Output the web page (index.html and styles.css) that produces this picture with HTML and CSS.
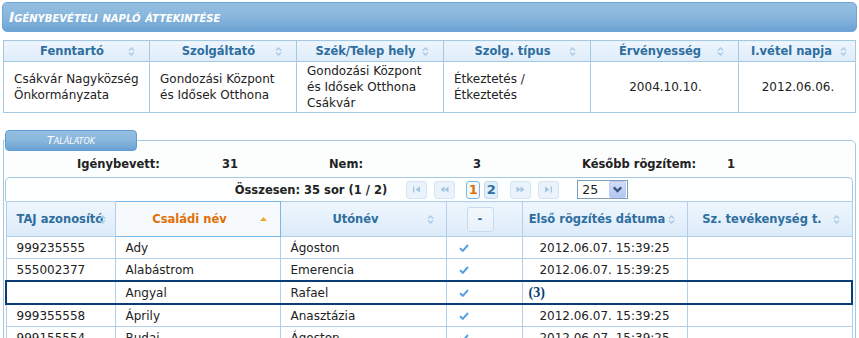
FILE: index.html
```html
<!doctype html>
<html lang="hu">
  <head>
    <meta charset="UTF-8" />
    <meta name="viewport" content="width=device-width, initial-scale=1.0" />
    <title>Igénybevételi napló áttekintése</title>
    <link rel="stylesheet" href="styles.css">
  </head>
  <body>
    <svg class="defs" width="0" height="0">
      <symbol id="i-sort" viewBox="0 0 7 9">
        <path d="M1 3.5 L3.5 1 L6 3.5 M1 5.5 L3.5 8 L6 5.5" fill="none" stroke="currentColor" stroke-width="1.4" />
      </symbol>
      <symbol id="i-check" viewBox="0 0 10 8">
        <path d="M1 4.2 L3.8 6.8 L9 1" fill="none" stroke="currentColor" stroke-width="2" />
      </symbol>
      <symbol id="i-first" viewBox="0 0 9 7">
        <path d="M1 0.5 h1.3 v6 h-1.3 z M8 0.5 L3.5 3.5 L8 6.5 z" fill="currentColor" />
      </symbol>
      <symbol id="i-prev" viewBox="0 0 9 7">
        <path d="M4.5 0.5 L0.5 3.5 L4.5 6.5 z M8.5 0.5 L4.5 3.5 L8.5 6.5 z" fill="currentColor" />
      </symbol>
      <symbol id="i-next" viewBox="0 0 9 7">
        <path d="M0.5 0.5 L4.5 3.5 L0.5 6.5 z M4.5 0.5 L8.5 3.5 L4.5 6.5 z" fill="currentColor" />
      </symbol>
      <symbol id="i-last" viewBox="0 0 9 7">
        <path d="M1 0.5 L5.5 3.5 L1 6.5 z M6.7 0.5 h1.3 v6 h-1.3 z" fill="currentColor" />
      </symbol>
    </svg>

    <div class="page-title">Igénybevételi napló áttekintése</div>

    <table class="summary">
      <colgroup>
        <col style="width: 146px" />
        <col style="width: 147px" />
        <col style="width: 147px" />
        <col style="width: 147px" />
        <col style="width: 148px" />
        <col />
      </colgroup>
      <thead>
        <tr>
          <th><div class="th-in"><span class="th-label">Fenntartó</span><svg class="sort"><use href="#i-sort" /></svg></div></th>
          <th><div class="th-in"><span class="th-label">Szolgáltató</span><svg class="sort"><use href="#i-sort" /></svg></div></th>
          <th><div class="th-in"><span class="th-label">Szék/Telep hely</span><svg class="sort"><use href="#i-sort" /></svg></div></th>
          <th><div class="th-in"><span class="th-label">Szolg. típus</span><svg class="sort"><use href="#i-sort" /></svg></div></th>
          <th><div class="th-in"><span class="th-label">Érvényesség</span><svg class="sort"><use href="#i-sort" /></svg></div></th>
          <th class="narrow"><div class="th-in"><span class="th-label">I.vétel napja</span><svg class="sort"><use href="#i-sort" /></svg></div></th>
        </tr>
      </thead>
      <tbody>
        <tr>
          <td>Csákvár Nagyközség Önkormányzata</td>
          <td>Gondozási Központ és Idősek Otthona</td>
          <td>Gondozási Központ és Idősek Otthona Csákvár</td>
          <td>Étkeztetés / Étkeztetés</td>
          <td class="center">2004.10.10.</td>
          <td class="center">2012.06.06.</td>
        </tr>
      </tbody>
    </table>

    <fieldset class="results">
      <legend><span class="legend-text">Találatok</span></legend>

      <div class="stats">
        <span>Igénybevett:</span><span>31</span>
        <span>Nem:</span><span>3</span>
        <span>Később rögzítem:</span><span>1</span>
      </div>

      <div class="pager">
        <span class="pager-total">Összesen: 35 sor (1 / 2)</span>
        <span class="pager-btns">
          <span class="pg-btn"><svg><use href="#i-first" /></svg></span>
          <span class="pg-btn"><svg><use href="#i-prev" /></svg></span>
        </span>
        <span class="pager-pages">
          <span class="pg-num active">1</span>
          <span class="pg-num">2</span>
        </span>
        <span class="pager-btns">
          <span class="pg-btn"><svg><use href="#i-next" /></svg></span>
          <span class="pg-btn"><svg><use href="#i-last" /></svg></span>
        </span>
        <span class="page-size">
          <span class="page-size-val">25</span>
          <span class="page-size-btn"><svg viewBox="0 0 14 14"><path d="M3.5 5 L7 8.5 L10.5 5" fill="none" stroke="#3d5582" stroke-width="2.2" /></svg></span>
        </span>
      </div>

      <table class="grid">
        <colgroup>
          <col style="width: 109px" />
          <col style="width: 165px" />
          <col style="width: 166px" />
          <col style="width: 76px" />
          <col style="width: 165px" />
          <col />
        </colgroup>
        <thead>
          <tr>
            <th class="taj"><div class="th-in"><span class="th-label">TAJ azonosító</span><svg class="sort"><use href="#i-sort" /></svg></div></th>
            <th class="active"><div class="th-in"><span class="th-label">Családi név</span><svg class="sort-up" viewBox="0 0 7 4"><path d="M0 4 L3.5 0 L7 4 z" fill="#f0a72a" /></svg></div></th>
            <th><div class="th-in"><span class="th-label">Utónév</span><svg class="sort"><use href="#i-sort" /></svg></div></th>
            <th><div class="th-in center"><span class="mini-btn">-</span></div></th>
            <th><div class="th-in"><span class="th-label">Első rögzítés dátuma</span><svg class="sort"><use href="#i-sort" /></svg></div></th>
            <th><div class="th-in"><span class="th-label">Sz. tevékenység t.</span><svg class="sort"><use href="#i-sort" /></svg></div></th>
          </tr>
        </thead>
        <tbody>
          <tr>
            <td>999235555</td><td>Ady</td><td>Ágoston</td>
            <td><svg class="check"><use href="#i-check" /></svg></td>
            <td class="center">2012.06.07. 15:39:25</td><td></td>
          </tr>
          <tr>
            <td>555002377</td><td>Alabástrom</td><td>Emerencia</td>
            <td><svg class="check"><use href="#i-check" /></svg></td>
            <td class="center">2012.06.07. 15:39:25</td><td></td>
          </tr>
          <tr class="selected">
            <td></td><td>Angyal</td><td>Rafael</td>
            <td><svg class="check"><use href="#i-check" /></svg></td>
            <td class="later">(3)</td><td></td>
          </tr>
          <tr>
            <td>999355558</td><td>Áprily</td><td>Anasztázia</td>
            <td><svg class="check"><use href="#i-check" /></svg></td>
            <td class="center">2012.06.07. 15:39:25</td><td></td>
          </tr>
          <tr>
            <td>999155554</td><td>Budai</td><td>Ágoston</td>
            <td><svg class="check"><use href="#i-check" /></svg></td>
            <td class="center">2012.06.07. 15:39:25</td><td></td>
          </tr>
        </tbody>
      </table>
    </fieldset>
  </body>
</html>
```

FILE: styles.css
```css
body {
  margin: 2px;
  font-family: "DejaVu Sans", Verdana, sans-serif;
  font-size: 12px;
  color: #222;
  background: #fff;
}
.defs {
  position: absolute;
  width: 0;
  height: 0;
}
.center {
  text-align: center;
}

/* title bar */
.page-title {
  height: 28px;
  padding-left: 6px;
  border: 1px solid #6ea7d8;
  border-radius: 5px;
  background: linear-gradient(#95bfe2, #88b6dc 50%, #6ba2d3);
  color: #fff;
  font-size: 14px;
  font-weight: bold;
  font-style: italic;
  font-variant: small-caps;
  line-height: 28px;
}

/* shared header cell */
.th-in {
  display: flex;
  align-items: center;
  white-space: nowrap;
}
.th-label {
  flex: 1;
  min-width: 0;
  text-align: center;
}
.sort {
  flex-shrink: 0;
  width: 7px;
  height: 9px;
  color: #a9cae6;
}

/* summary table */
.summary {
  width: 853px;
  margin: 8px 1px 0;
  border-collapse: collapse;
  table-layout: fixed;
}
.summary th,
.summary td {
  border: 1px solid #a6c9e2;
}
.summary th {
  height: 20px;
  padding: 0;
  background: linear-gradient(#eef6fd, #deecfa);
  color: #2e6e9e;
  font-size: 11.5px;
}
.summary th .th-in {
  padding: 0 14px 0 12px;
}
.summary th.narrow .th-in {
  padding: 0 8px 0 4px;
}
.summary td {
  height: 48px;
  padding: 1px 8px 1px 10px;
  line-height: 16px;
  background: #fff;
}

/* results box */
.results {
  margin: 17px 1px 0;
  padding: 0 2px 0 1px;
  border: 1px solid #a6c9e2;
  border-radius: 0 5px 0 0;
  background: #fcfdfd;
}
.results legend {
  width: 130px;
  height: 19px;
  padding: 0;
  border: 1px solid #5f9fd6;
  border-radius: 4px;
  background: linear-gradient(#95bfe2, #88b6dc 50%, #6ba2d3);
  color: #fff;
  text-align: left;
}
.legend-text {
  display: block;
  font-size: 11px;
  font-style: italic;
  font-variant: small-caps;
  line-height: 19px;
  text-align: center;
}

.stats {
  display: grid;
  grid-template-columns: 145px 107px 144px 109px 145px 1fr;
  align-items: center;
  height: 26px;
  padding-left: 72px;
  font-size: 11.5px;
  font-weight: bold;
}

/* pager */
.pager {
  display: flex;
  align-items: center;
  justify-content: center;
  height: 23px;
  padding-left: 5px;
  border: 1px solid #a6c9e2;
  border-bottom: 0;
  border-radius: 5px 5px 0 0;
  background: #fdfefe;
  font-size: 11.5px;
}
.pager-total {
  font-weight: bold;
  margin-right: 19px;
}
.pager-btns {
  display: flex;
  gap: 7px;
}
.pg-btn {
  display: flex;
  align-items: center;
  justify-content: center;
  width: 19px;
  height: 16px;
  border: 1px solid #d5e5f3;
  border-radius: 3px;
  background: #eaf3fc;
  color: #a5c4e0;
}
.pg-btn svg {
  width: 9px;
  height: 7px;
}
.pager-pages {
  display: flex;
  gap: 4px;
  margin: 0 12px 0 11px;
}
.pg-num {
  width: 12px;
  height: 16px;
  border: 1px solid #c5dbec;
  border-radius: 3px;
  background: #dfeffc;
  color: #2e6e9e;
  font-size: 13px;
  font-weight: bold;
  line-height: 16px;
  text-align: center;
}
.pg-num.active {
  border-color: #79b7e7;
  background: #f5f8f9;
  color: #e17009;
}
.page-size {
  display: flex;
  align-items: center;
  width: 48px;
  height: 17px;
  margin-left: 18px;
  padding-right: 1px;
  border: 1px solid #7f9db9;
  background: #fff;
}
.page-size-val {
  flex: 1;
  padding-left: 4px;
  font-size: 12.5px;
}
.page-size-btn {
  display: flex;
  width: 15px;
  height: 15px;
  border: 1px solid #bccaee;
  border-radius: 2px;
  background: linear-gradient(#d2ddf9, #b3c5f2);
}
.page-size-btn svg {
  width: 15px;
  height: 15px;
}

/* result grid */
.grid {
  width: 100%;
  border-collapse: collapse;
  table-layout: fixed;
}
.grid th,
.grid td {
  border: 1px solid #b3d0ea;
}
.grid th {
  height: 34px;
  padding: 0;
  background: linear-gradient(#eef6fd, #dcebf9);
  color: #2e6e9e;
  font-size: 11.5px;
}
.grid th .th-in {
  padding: 0 12px 0 4px;
}
.grid th.taj .th-in {
  padding: 0 9px 0 10px;
}
.grid th.taj .th-label {
  text-align: left;
}
.grid th.active {
  border-color: #79b7e7;
  background: #f7fafc;
  color: #e17009;
}
.grid th.active .th-in {
  padding-right: 13px;
}
.sort-up {
  width: 7px;
  height: 4px;
}
.mini-btn {
  width: 25px;
  height: 23px;
  border: 1px solid #c5dbec;
  border-radius: 3px;
  background: linear-gradient(#f4f8fd, #e6f0fa);
  color: #2e6e9e;
  line-height: 23px;
  text-align: center;
}
.th-in.center {
  justify-content: center;
  padding: 0;
}
.grid td {
  height: 21px;
  padding: 0 10px;
  background: #fff;
  white-space: nowrap;
}
.grid .check {
  display: block;
  width: 10px;
  height: 8px;
  margin-left: 2px;
  color: #54a0e2;
}
.grid tr.selected td {
  border-top: 2px solid #0a3d78;
  border-bottom: 2px solid #0a3d78;
}
.grid tr.selected td:first-child {
  border-left: 2px solid #0a3d78;
}
.grid tr.selected td:last-child {
  border-right: 2px solid #0a3d78;
}
.grid td.later {
  padding-left: 6px;
  color: #0a3d78;
  font-family: "Liberation Serif", serif;
  font-size: 14px;
  font-weight: bold;
}
```
